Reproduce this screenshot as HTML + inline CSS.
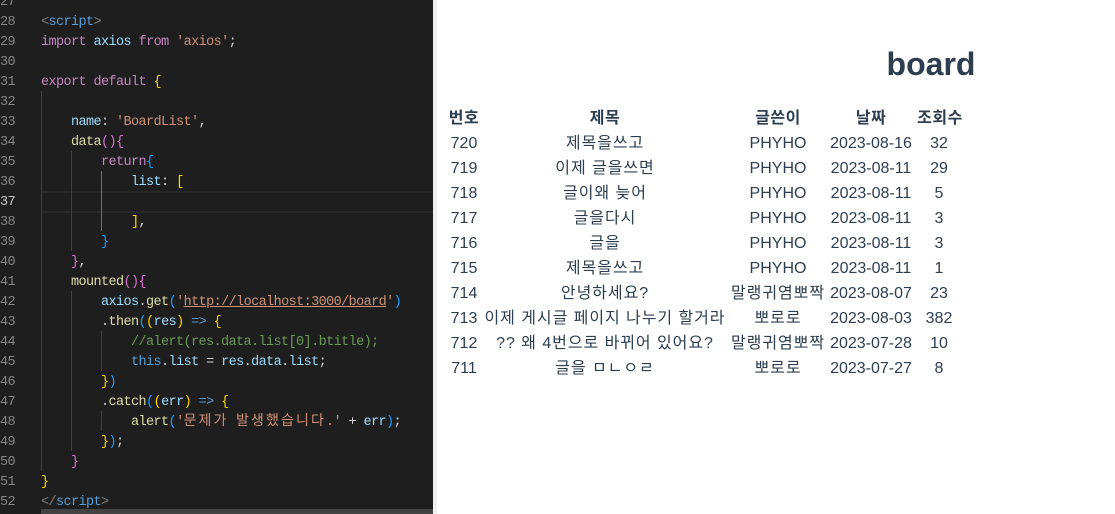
<!DOCTYPE html>
<html><head><meta charset="utf-8">
<style>
html,body{margin:0;padding:0;background:#fff;width:1115px;height:514px;overflow:hidden}
#ed{position:absolute;left:0;top:0;width:433px;height:514px;background:#1e1e1e;overflow:hidden}
#sep{position:absolute;left:433px;top:0;width:4px;height:514px;background:#f0f0f0}
.g{position:absolute;width:1px;background:#404040}
.n,.l{position:absolute;white-space:pre;font:13.5px/20px "Liberation Mono","Noto Sans CJK KR",monospace;letter-spacing:-.6px;margin-top:2px}
.n{left:0;color:#858585}
.l{left:41px;color:#d4d4d4}
.k{color:#c586c0}.v{color:#9cdcfe}.s{color:#ce9178}.c{color:#6a9955}.f{color:#dcdcaa}.y{color:#ffd700}.p{color:#da70d6}.b{color:#179fff}.t{color:#569cd6}.a{color:#808080}
.ko{font-family:"Noto Sans CJK KR",sans-serif;font-size:14px;letter-spacing:2.1px;line-height:0}
#r{position:absolute;left:0;top:0;font-family:"Liberation Sans","Noto Sans CJK KR",sans-serif;color:#2c3e50;font-size:16px;line-height:20px}
#r span{position:absolute;transform:translateX(-50%);white-space:pre}
#r span.h{font-weight:bold;letter-spacing:.5px;top:109px}
#r span.w{letter-spacing:.95px}
#r span.tt{font-weight:bold;font-size:32px;line-height:40px}
</style></head><body>
<div id="ed">
<div style="position:absolute;left:42px;top:191px;width:391px;height:18px;border-top:2px solid #282828;border-bottom:2px solid #282828"></div>
<div class="g" style="left:41px;top:91px;height:380px"></div>
<div class="g" style="left:71px;top:151px;height:100px"></div>
<div class="g" style="left:71px;top:291px;height:160px"></div>
<div class="g" style="left:101px;top:171px;height:60px;background:#707070"></div>
<div class="g" style="left:101px;top:331px;height:40px"></div>
<div class="g" style="left:101px;top:411px;height:20px"></div>
<div style="position:absolute;left:41px;top:509px;width:392px;height:5px;background:#424242"></div>
<div class="n" style="top:-9px">27</div>
<div class="n" style="top:11px">28</div>
<div class="n" style="top:31px">29</div>
<div class="n" style="top:51px">30</div>
<div class="n" style="top:71px">31</div>
<div class="n" style="top:91px">32</div>
<div class="n" style="top:111px">33</div>
<div class="n" style="top:131px">34</div>
<div class="n" style="top:151px">35</div>
<div class="n" style="top:171px">36</div>
<div class="n" style="top:191px;color:#c6c6c6">37</div>
<div class="n" style="top:211px">38</div>
<div class="n" style="top:231px">39</div>
<div class="n" style="top:251px">40</div>
<div class="n" style="top:271px">41</div>
<div class="n" style="top:291px">42</div>
<div class="n" style="top:311px">43</div>
<div class="n" style="top:331px">44</div>
<div class="n" style="top:351px">45</div>
<div class="n" style="top:371px">46</div>
<div class="n" style="top:391px">47</div>
<div class="n" style="top:411px">48</div>
<div class="n" style="top:431px">49</div>
<div class="n" style="top:451px">50</div>
<div class="n" style="top:471px">51</div>
<div class="n" style="top:491px">52</div>
<div class="l" style="top:11px"><span class="a">&lt;</span><span class="t">script</span><span class="a">&gt;</span></div>
<div class="l" style="top:31px"><span class="k">import</span> <span class="v">axios</span> <span class="k">from</span> <span class="s">'axios'</span>;</div>
<div class="l" style="top:71px"><span class="k">export default</span> <span class="y">{</span></div>
<div class="l" style="top:111px">    <span class="v">name</span>: <span class="s">'BoardList'</span>,</div>
<div class="l" style="top:131px">    <span class="f">data</span><span class="p">(){</span></div>
<div class="l" style="top:151px">        <span class="k">return</span><span class="b">{</span></div>
<div class="l" style="top:171px">            <span class="v">list</span>: <span class="y">[</span></div>
<div class="l" style="top:211px">            <span class="y">]</span>,</div>
<div class="l" style="top:231px">        <span class="b">}</span></div>
<div class="l" style="top:251px">    <span class="p">}</span>,</div>
<div class="l" style="top:271px">    <span class="f">mounted</span><span class="p">(){</span></div>
<div class="l" style="top:291px">        <span class="v">axios</span>.<span class="f">get</span><span class="b">(</span><span class="s">'<span style="text-decoration:underline">http://localhost:3000/board</span>'</span><span class="b">)</span></div>
<div class="l" style="top:311px">        .<span class="f">then</span><span class="b">(</span><span class="y">(</span><span class="v">res</span><span class="y">)</span> <span class="t">=&gt;</span> <span class="y">{</span></div>
<div class="l" style="top:331px">            <span class="c">//alert(res.data.list[0].btitle);</span></div>
<div class="l" style="top:351px">            <span class="t">this</span>.<span class="v">list</span> = <span class="v">res</span>.<span class="v">data</span>.<span class="v">list</span>;</div>
<div class="l" style="top:371px">        <span class="y">}</span><span class="b">)</span></div>
<div class="l" style="top:391px">        .<span class="f">catch</span><span class="b">(</span><span class="y">(</span><span class="v">err</span><span class="y">)</span> <span class="t">=&gt;</span> <span class="y">{</span></div>
<div class="l" style="top:411px">            <span class="f">alert</span><span class="b">(</span><span class="s">'<span class="ko">문제가</span> <span class="ko">발생했습니다</span>.'</span> + <span class="v">err</span><span class="b">)</span>;</div>
<div class="l" style="top:431px">        <span class="y">}</span><span class="b">)</span>;</div>
<div class="l" style="top:451px">    <span class="p">}</span></div>
<div class="l" style="top:471px"><span class="y">}</span></div>
<div class="l" style="top:491px"><span class="a">&lt;/</span><span class="t">script</span><span class="a">&gt;</span></div>
</div>
<div id="sep"></div>
<div id="r">
<span class="tt" style="left:931px;top:44px">board</span>
<span class="h" style="left:464px">번호</span><span class="h" style="left:605px">제목</span><span class="h" style="left:778px">글쓴이</span><span class="h" style="left:871px">날짜</span><span class="h" style="left:940px">조회수</span>
<span style="left:464px;top:134px">720</span><span class="w" style="left:605px;top:134px">제목을쓰고</span><span style="left:778px;top:134px">PHYHO</span><span style="left:871px;top:134px">2023-08-16</span><span style="left:939px;top:134px">32</span>
<span style="left:464px;top:159px">719</span><span class="w" style="left:605px;top:159px">이제 글을쓰면</span><span style="left:778px;top:159px">PHYHO</span><span style="left:871px;top:159px">2023-08-11</span><span style="left:939px;top:159px">29</span>
<span style="left:464px;top:184px">718</span><span class="w" style="left:605px;top:184px">글이왜 늦어</span><span style="left:778px;top:184px">PHYHO</span><span style="left:871px;top:184px">2023-08-11</span><span style="left:939px;top:184px">5</span>
<span style="left:464px;top:209px">717</span><span class="w" style="left:605px;top:209px">글을다시</span><span style="left:778px;top:209px">PHYHO</span><span style="left:871px;top:209px">2023-08-11</span><span style="left:939px;top:209px">3</span>
<span style="left:464px;top:234px">716</span><span class="w" style="left:605px;top:234px">글을</span><span style="left:778px;top:234px">PHYHO</span><span style="left:871px;top:234px">2023-08-11</span><span style="left:939px;top:234px">3</span>
<span style="left:464px;top:259px">715</span><span class="w" style="left:605px;top:259px">제목을쓰고</span><span style="left:778px;top:259px">PHYHO</span><span style="left:871px;top:259px">2023-08-11</span><span style="left:939px;top:259px">1</span>
<span style="left:464px;top:284px">714</span><span class="w" style="left:605px;top:284px">안녕하세요?</span><span class="w" style="left:778px;top:284px">말랭귀염뽀짝</span><span style="left:871px;top:284px">2023-08-07</span><span style="left:939px;top:284px">23</span>
<span style="left:464px;top:309px">713</span><span class="w" style="left:605px;top:309px">이제 게시글 페이지 나누기 할거라</span><span class="w" style="left:778px;top:309px">뽀로로</span><span style="left:871px;top:309px">2023-08-03</span><span style="left:939px;top:309px">382</span>
<span style="left:464px;top:334px">712</span><span class="w" style="left:605px;top:334px">?? 왜 4번으로 바뀌어 있어요?</span><span class="w" style="left:778px;top:334px">말랭귀염뽀짝</span><span style="left:871px;top:334px">2023-07-28</span><span style="left:939px;top:334px">10</span>
<span style="left:464px;top:359px">711</span><span class="w" style="left:605px;top:359px">글을 ㅁㄴㅇㄹ</span><span class="w" style="left:778px;top:359px">뽀로로</span><span style="left:871px;top:359px">2023-07-27</span><span style="left:939px;top:359px">8</span>
</div>
</body></html>
